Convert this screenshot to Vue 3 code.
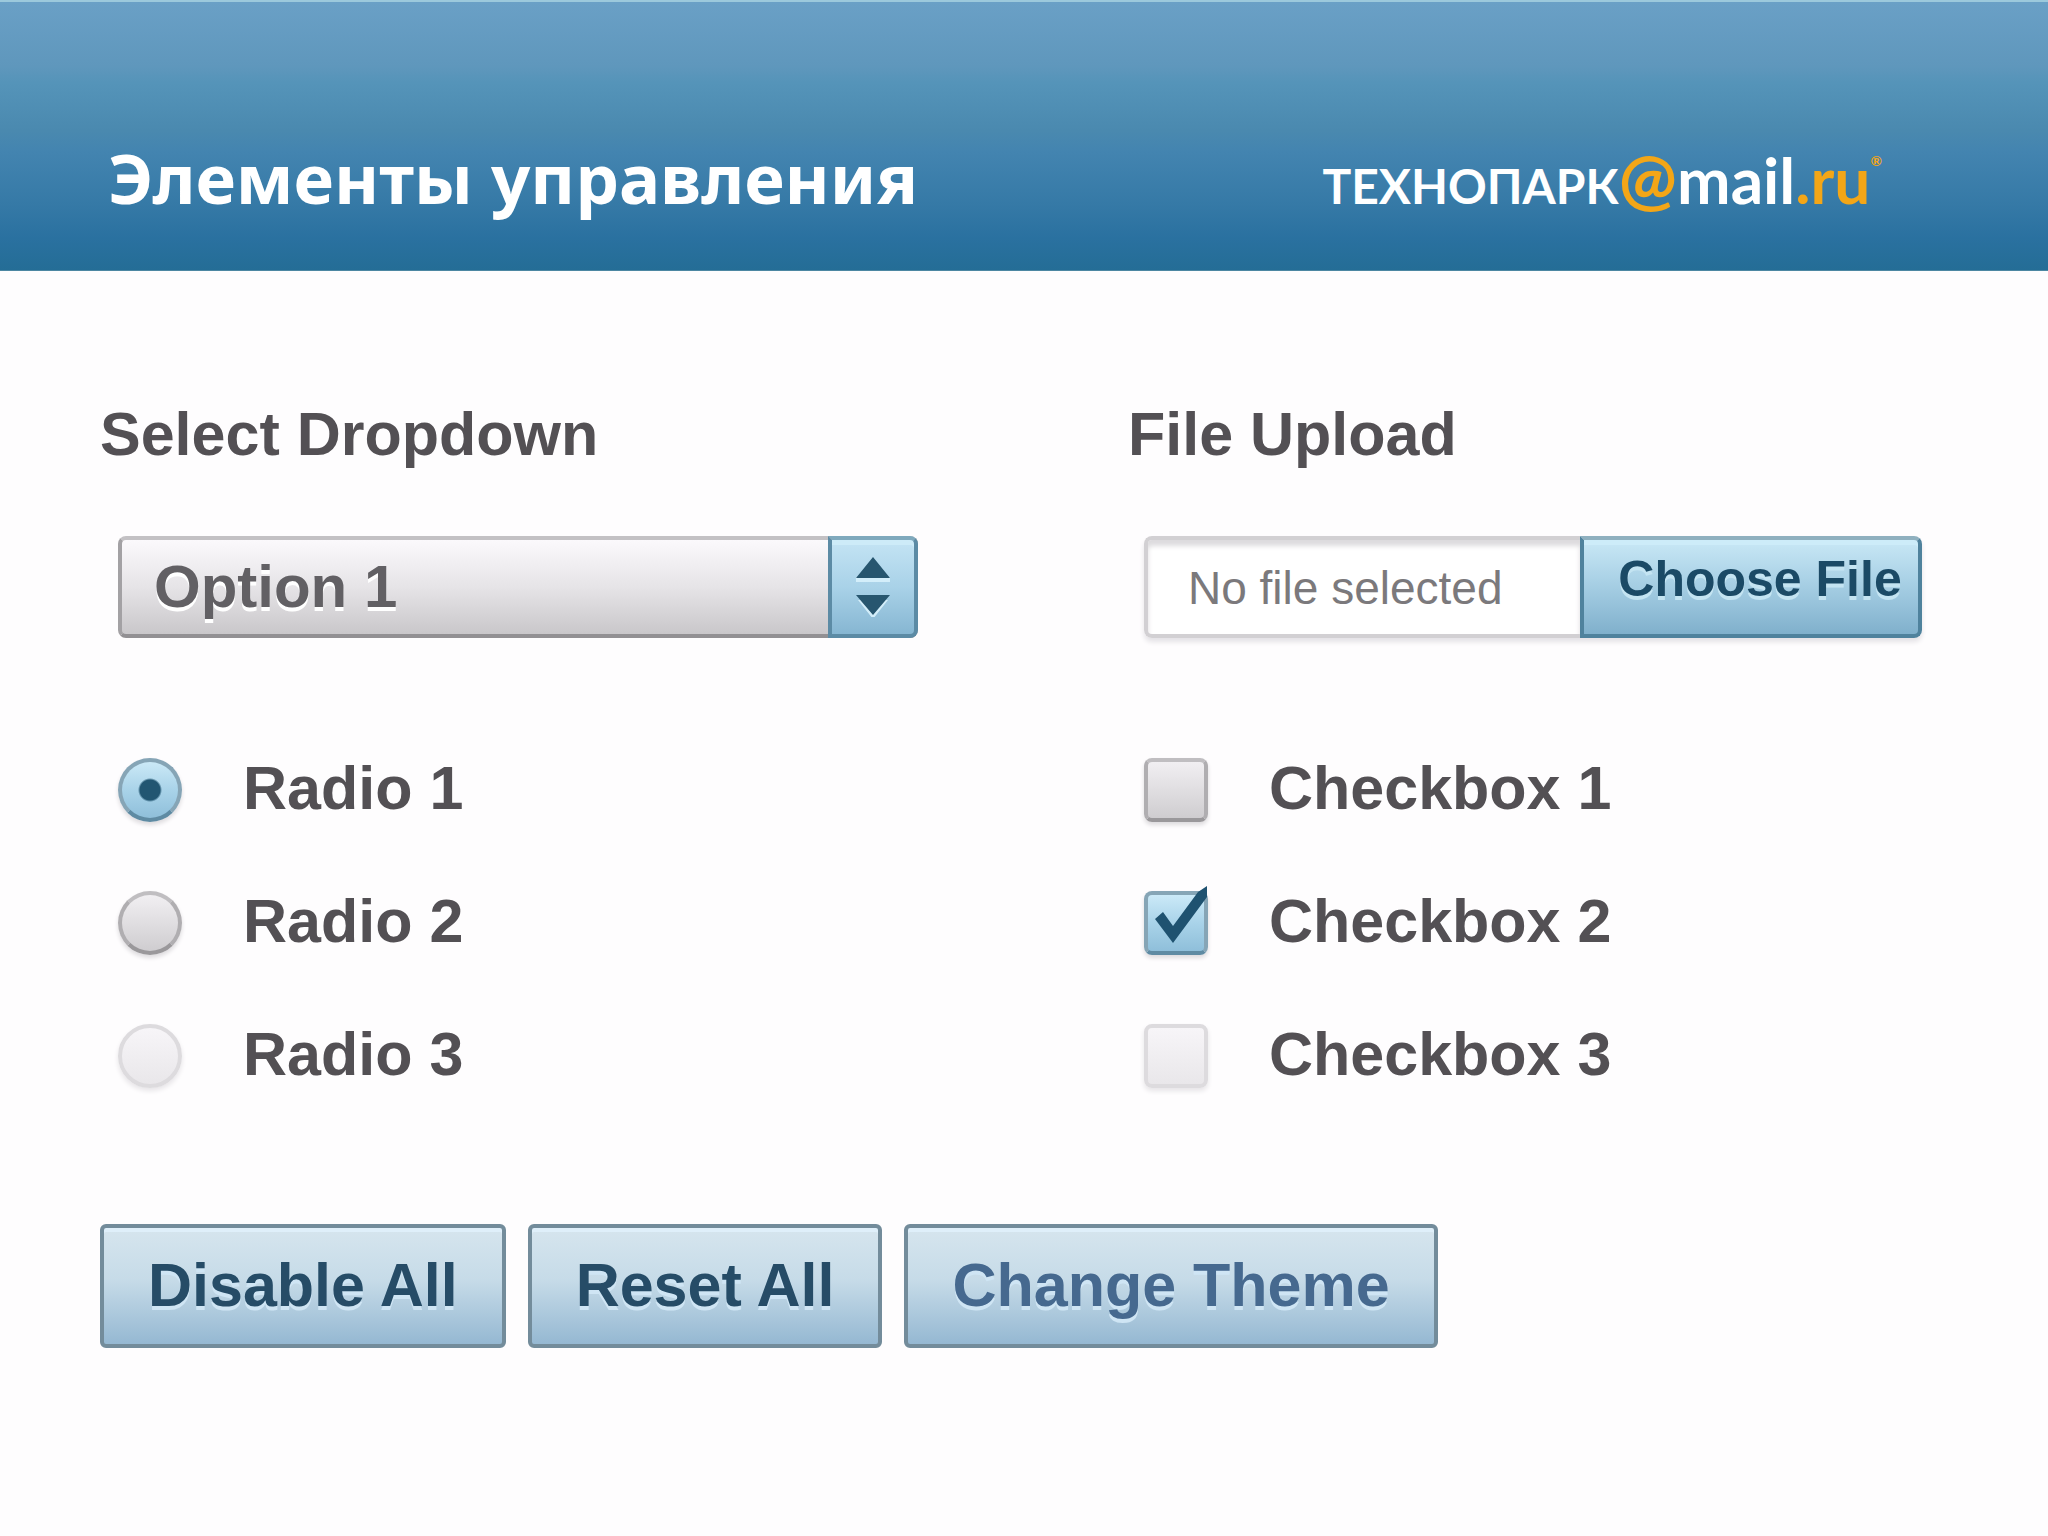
<script setup>
import { ref } from 'vue'

const option = ref('Option 1')
const options = ['Option 1', 'Option 2', 'Option 3']
const radio = ref('Radio 1')
const radios = [
  { label: 'Radio 1', disabled: false },
  { label: 'Radio 2', disabled: false },
  { label: 'Radio 3', disabled: true },
]
const checkboxes = ref([
  { label: 'Checkbox 1', checked: false, disabled: false },
  { label: 'Checkbox 2', checked: true, disabled: false },
  { label: 'Checkbox 3', checked: false, disabled: true },
])
const fileName = ref('No file selected')
const picker = ref(null)

function onPick(event) {
  const file = event.target.files[0]
  fileName.value = file ? file.name : 'No file selected'
}
</script>

<template>
  <div class="page">
    <header class="header">
      <h1 class="title">Элементы управления</h1>
      <a class="logo" href="#"><span class="logo-tech">ТЕХНОПАРК</span><span class="logo-at">@</span><span class="logo-mail">mail</span><span class="logo-ru">.ru</span><span class="logo-reg">®</span></a>
    </header>

    <main class="content">
      <div class="columns">
        <section class="column">
          <label class="heading" for="dropdown">Select Dropdown</label>
          <div class="select-box">
            <select id="dropdown" v-model="option" class="select">
              <option v-for="item in options" :key="item">{{ item }}</option>
            </select>
            <span class="select-arrows">
              <svg width="34" height="60" viewBox="0 0 34 60" aria-hidden="true">
                <path d="M0 20h34v5H0zM2 43h30L17 62z" fill="#d3eefa" />
                <path d="M17 0L34 21H0zM0 38h34L17 58z" fill="#27566f" />
              </svg>
            </span>
          </div>
          <div class="choices">
            <label v-for="item in radios" :key="item.label" class="choice">
              <input v-model="radio" class="radio" type="radio" name="radio" :value="item.label" :disabled="item.disabled" />
              <span>{{ item.label }}</span>
            </label>
          </div>
        </section>

        <section class="column">
          <label class="heading" for="file-name">File Upload</label>
          <div class="file-box">
            <input id="file-name" class="file-name" type="text" :value="fileName" readonly />
            <button class="file-button" type="button" @click="picker.click()">Choose File</button>
            <input ref="picker" type="file" hidden @change="onPick" />
          </div>
          <div class="choices">
            <label v-for="item in checkboxes" :key="item.label" class="choice">
              <span class="check-box">
                <input v-model="item.checked" class="check" type="checkbox" :disabled="item.disabled" />
                <svg v-if="item.checked" class="tick" viewBox="0 0 70 64" aria-hidden="true">
                  <path d="M11 28l8-7 10 14L54 1l9-6v11L29 52z" fill="#1f5270" />
                </svg>
              </span>
              <span>{{ item.label }}</span>
            </label>
          </div>
        </section>
      </div>

      <div class="actions">
        <button class="action" type="button">Disable All</button>
        <button class="action" type="button">Reset All</button>
        <button class="action action-theme" type="button">Change Theme</button>
      </div>
    </main>
  </div>
</template>

<style>
body {
  margin: 0;
  background: #fefdfe;
}
</style>

<style scoped>
.page {
  font-family: "Liberation Sans", Arial, sans-serif;
  color: #535054;
}
.header {
  box-sizing: border-box;
  height: 271px;
  padding: 0 166px 48px 108px;
  display: flex;
  justify-content: space-between;
  align-items: flex-end;
  border-top: 2px solid #9cc9dc;
  border-bottom: 1px solid #4c87a2;
  background: linear-gradient(#6aa0c6, #5f97bc 24%, #5594b9 30%, #4a89af 48%, #4384b0 56%, #3579a6 76%, #2a71a0 88%, #246d96);
}
.title {
  margin: 0;
  font: bold 69px/90px "Noto Sans", "Open Sans", sans-serif;
  color: #fff;
}
.logo {
  display: flex;
  align-items: baseline;
  font: bold 48px/72px Lato, "Noto Sans", sans-serif;
  color: #fff;
  text-decoration: none;
}
.logo-at,
.logo-ru,
.logo-reg {
  color: #f3a617;
}
.logo-at {
  font-size: 69px;
}
.logo-mail,
.logo-ru {
  font-size: 64px;
}
.logo-reg {
  font-size: 14px;
  line-height: 14px;
  align-self: flex-start;
  margin-top: 12px;
}
.content {
  padding: 133px 102px 100px 100px;
}
.columns {
  display: grid;
  grid-template-columns: 1fr 1fr;
  gap: 210px;
}
.column {
  min-width: 0;
}
.heading {
  display: block;
  margin-bottom: 72px;
  font-size: 61px;
  font-weight: bold;
  line-height: 60px;
}
.select-box {
  position: relative;
  height: 102px;
  margin-left: 18px;
}
.select {
  box-sizing: border-box;
  width: 100%;
  height: 100%;
  padding: 0 120px 0 32px;
  appearance: none;
  border: 4px solid #a3a1a4;
  border-top-color: #c3c1c4;
  border-bottom-color: #929093;
  border-radius: 8px;
  background: linear-gradient(#fbf9fc, #e6e4e7 50%, #c9c7ca);
  color: #626064;
  font: bold 60px/90px "Liberation Sans", Arial, sans-serif;
  text-shadow: 0 4px 0 #fff;
}
.select-arrows {
  box-sizing: border-box;
  position: absolute;
  top: 0;
  right: 0;
  width: 90px;
  height: 100%;
  display: flex;
  align-items: center;
  justify-content: center;
  border: 4px solid #5c8ba5;
  border-top-color: #7fa9bd;
  border-radius: 0 8px 8px 0;
  background: linear-gradient(#c4e4f4, #a9d2e8 50%, #86b6d2);
  box-shadow: inset 0 5px 0 #cdebf8;
  pointer-events: none;
}
.file-box {
  display: flex;
  height: 102px;
  margin: 0 24px 0 16px;
  border-radius: 8px;
  box-shadow: 0 4px 5px #e4e2e6;
}
.file-name {
  box-sizing: border-box;
  flex: 1;
  min-width: 0;
  padding: 2px 40px 0;
  border: 4px solid #d2d0d3;
  border-right: 0;
  border-radius: 8px 0 0 8px;
  background: #fff;
  box-shadow: inset 0 6px 5px #dddbde;
  color: #7b797c;
  font: 46px/90px "Liberation Sans", Arial, sans-serif;
}
.file-button {
  box-sizing: border-box;
  width: 342px;
  padding: 0 0 16px 18px;
  border: 4px solid #4f829d;
  border-top-color: #8fb0bf;
  border-radius: 0 8px 8px 0;
  background: linear-gradient(#c9e8f6, #a8d0e5 45%, #80b0cc);
  box-shadow: inset 0 5px 0 #cdecf9;
  color: #1b4a66;
  font: bold 50px/60px "Liberation Sans", Arial, sans-serif;
  text-shadow: 0 4px 0 #c4e4f2;
  white-space: nowrap;
}
.choices {
  display: flex;
  flex-direction: column;
  gap: 69px;
  margin-top: 120px;
}
.choice {
  display: flex;
  align-items: flex-start;
  gap: 61px;
  height: 64px;
  padding-left: 18px;
  font-size: 61px;
  font-weight: bold;
  line-height: 60px;
}
.column + .column .choice {
  padding-left: 16px;
}
.radio,
.check {
  box-sizing: border-box;
  flex: none;
  display: block;
  width: 64px;
  height: 64px;
  margin: 0;
  appearance: none;
  border: 4px solid #b0aeb1;
  border-top-color: #c0bec1;
  border-bottom-color: #9a989b;
  background: linear-gradient(#f1eff2, #e0dee1 50%, #cfcdd0);
  box-shadow: 0 3px 4px #dddbde;
}
.radio {
  border-radius: 50%;
}
.check {
  border-radius: 8px;
}
.radio:checked,
.check:checked {
  border-color: #86a5b6;
  border-bottom-color: #5f8ba3;
  background: linear-gradient(#cbe9f7, #a9d3e9 50%, #8fbfda);
}
.radio:checked {
  background: radial-gradient(circle, #225672 10px, transparent 12px), linear-gradient(#cbe9f7, #a9d3e9 50%, #8fbfda);
}
.radio:disabled,
.check:disabled {
  border-color: #dddbde;
  background: linear-gradient(#f7f5f8, #e9e7ea);
  box-shadow: 0 3px 5px #e6e4e7;
}
.check-box {
  position: relative;
  flex: none;
}
.tick {
  position: absolute;
  top: 0;
  left: 0;
  width: 70px;
  height: 64px;
  overflow: visible;
  pointer-events: none;
}
.actions {
  display: flex;
  gap: 22px;
  margin-top: 136px;
}
.action {
  box-sizing: border-box;
  height: 124px;
  padding: 0 44px 2px;
  border: 4px solid #738c9b;
  border-radius: 6px;
  background: linear-gradient(#d6e5ee, #c6dbe8 45%, #95b8d2);
  box-shadow: inset 0 4px 0 #dfeffa;
  color: #264c67;
  font: bold 61px/60px "Liberation Sans", Arial, sans-serif;
  text-shadow: 0 4px 0 #cfe5f4;
  white-space: nowrap;
}
.action-theme {
  color: #46698f;
}
</style>
